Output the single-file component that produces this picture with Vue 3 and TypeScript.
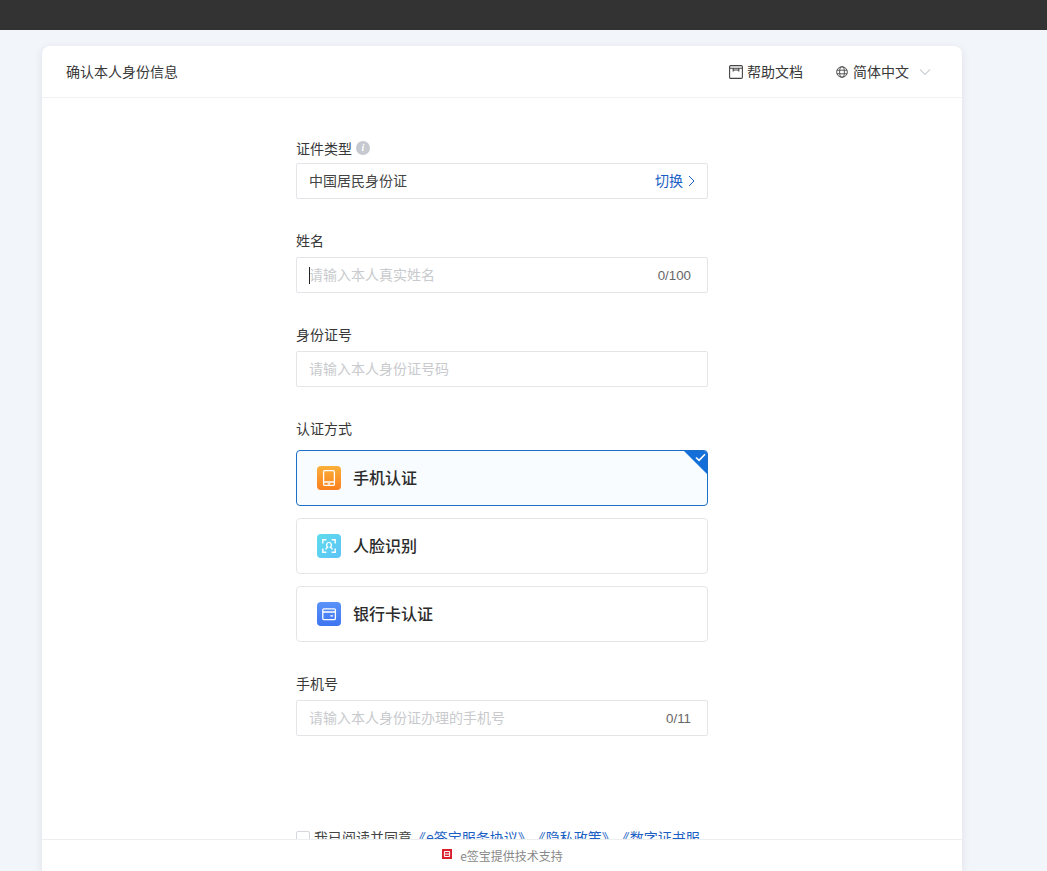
<script setup lang="ts">
const options = [
  { title: '手机认证', kind: 'phone', active: true },
  { title: '人脸识别', kind: 'face', active: false },
  { title: '银行卡认证', kind: 'bank', active: false },
]
</script>

<template>
  <div class="page">
    <div class="topbar"></div>
    <main class="card">
      <header class="head">
        <span class="head-title">确认本人身份信息</span>
        <div class="head-tools">
          <span class="tool">
            <svg class="tool-icon" viewBox="0 0 14 14" fill="none" stroke="#444" stroke-width="1.1">
              <rect x="0.6" y="0.6" width="12.8" height="12.8" rx="1.2" />
              <path d="M0.6 3.2H13.4M4.2 3.4V6.6M9.8 3.4V6.6M4.2 5H9.8" />
            </svg>
            <span class="tool-text">帮助文档</span>
          </span>
          <span class="tool lang">
            <svg class="globe" viewBox="0 0 12 12" fill="none" stroke="#555" stroke-width="1">
              <circle cx="6" cy="6" r="5.3" />
              <ellipse cx="6" cy="6" rx="2.4" ry="5.3" />
              <path d="M0.8 4.2H11.2M0.8 7.8H11.2" />
            </svg>
            <span class="tool-text">简体中文</span>
            <svg class="caret" viewBox="0 0 12 8" fill="none" stroke="#ccd0d6" stroke-width="1.1">
              <path d="M1 1.5L6 6.5L11 1.5" />
            </svg>
          </span>
        </div>
      </header>

      <div class="body">
        <form class="form" @submit.prevent>
          <div class="field">
            <label class="label label-tip">
              证件类型
              <span class="info">i</span>
            </label>
            <div class="box">
              <span class="value">中国居民身份证</span>
              <a class="switch">
                切换
                <svg class="chev" viewBox="0 0 7 12" fill="none" stroke="#1b5fc4" stroke-width="1">
                  <path d="M1 1L6 6L1 11" />
                </svg>
              </a>
            </div>
          </div>

          <div class="field">
            <label class="label">姓名</label>
            <div class="box">
              <i class="cursor"></i>
              <span class="placeholder">请输入本人真实姓名</span>
              <span class="count">0/100</span>
            </div>
          </div>

          <div class="field">
            <label class="label">身份证号</label>
            <div class="box">
              <span class="placeholder">请输入本人身份证号码</span>
            </div>
          </div>

          <div class="field">
            <label class="label label-method">认证方式</label>
            <div class="options">
              <div v-for="o in options" :key="o.kind" class="option" :class="{ active: o.active }">
                <span class="opt-icon" :class="o.kind">
                  <svg v-if="o.kind === 'phone'" viewBox="0 0 24 24" fill="none" stroke="#fff" stroke-width="1.3">
                    <rect x="6.6" y="4.6" width="10.8" height="14.8" rx="1.2" />
                    <path d="M6.6 16H17.4M10.8 17.8H13.2" />
                  </svg>
                  <svg v-else-if="o.kind === 'face'" viewBox="0 0 24 24" fill="none" stroke="#fff" stroke-width="1.4">
                    <path d="M5.8 9.4V5.8H9.4M14.6 5.8H18.2V9.4M5.8 14.6V18.2H9.4M14.6 18.2H18.2V14.6" />
                    <path d="M8.8 15.6C8.8 14 9.8 13.6 10.6 13.2C9.7 12.4 9.5 11.4 9.7 10.4C10 9 10.9 8.4 12 8.4C13.1 8.4 14 9 14.3 10.4C14.5 11.4 14.3 12.4 13.4 13.2C14.2 13.6 15.2 14 15.2 15.6" />
                  </svg>
                  <svg v-else viewBox="0 0 24 24" fill="none" stroke="#fff" stroke-width="1.3">
                    <rect x="5.8" y="6.8" width="12.6" height="10.8" rx="1" />
                    <path d="M5.8 10H18.4M13.4 13.8H16" />
                  </svg>
                </span>
                <span class="opt-title">{{ o.title }}</span>
                <span v-if="o.active" class="corner"></span>
                <svg v-if="o.active" class="tick" viewBox="0 0 12 10" fill="none" stroke="#fff" stroke-width="1.7">
                  <path d="M1 5L4.4 8.2L11 1.4" />
                </svg>
              </div>
            </div>
          </div>

          <div class="field">
            <label class="label">手机号</label>
            <div class="box">
              <span class="placeholder">请输入本人身份证办理的手机号</span>
              <span class="count">0/11</span>
            </div>
          </div>

          <div class="agree">
            <span class="checkbox"></span>
            <span class="agree-text">我已阅读并同意<a class="link">《e签宝服务协议》《隐私政策》《数字证书服</a></span>
          </div>
        </form>
      </div>

      <footer class="foot">
        <svg class="logo" viewBox="0 0 10 10">
          <rect width="10" height="10" fill="#d9202c" />
          <path d="M2.4 2.5H7.6V7.5H2.4Z" fill="none" stroke="#fff" stroke-width="1" />
          <path d="M3 5H7" stroke="#fff" stroke-width="1" />
        </svg>
        <span>e签宝提供技术支持</span>
      </footer>
    </main>
  </div>
</template>

<style>
html,
body {
  margin: 0;
  height: 100%;
  overflow: hidden;
}
</style>

<style scoped>
.page {
  height: 871px;
  display: flex;
  flex-direction: column;
  background: #f2f5f9;
  font-family: "Noto Sans CJK SC", "Noto Sans", sans-serif;
  font-size: 14px;
  color: #383838;
  overflow: hidden;
  text-spacing-trim: space-all;
}
.topbar {
  height: 30px;
  flex: none;
  background: #333;
}
.card {
  flex: 1;
  min-height: 0;
  width: 920px;
  margin: 16px 0 0 42px;
  display: flex;
  flex-direction: column;
  background: #fff;
  border-radius: 8px 8px 0 0;
  box-shadow: 0 2px 8px rgba(40, 60, 100, 0.1);
}
.head {
  height: 51px;
  flex: none;
  display: flex;
  align-items: center;
  justify-content: space-between;
  padding: 0 31px 0 24px;
  border-bottom: 1px solid #f0f1f3;
}
.head-title,
.tool-text {
  line-height: 22px;
  margin-top: -2px;
}
.head-tools {
  display: flex;
  align-items: center;
  gap: 33px;
}
.tool {
  display: flex;
  align-items: center;
  gap: 4px;
  line-height: 22px;
}
.tool-icon {
  width: 14px;
  height: 14px;
}
.globe {
  width: 12px;
  height: 12px;
  margin-right: 1px;
}
.caret {
  width: 12px;
  height: 8px;
  margin-left: 6px;
}
.body {
  flex: 1;
  min-height: 0;
  overflow: hidden;
}
.form {
  width: 412px;
  margin: 40px 0 0 254px;
}
.field + .field {
  margin-top: 31px;
}
.label {
  display: flex;
  align-items: center;
  gap: 4px;
  height: 20px;
  line-height: 20px;
  margin-bottom: 7px;
}
.label-tip {
  margin-bottom: 5px;
}
.label-method {
  margin-bottom: 12px;
}
.info {
  width: 14px;
  height: 14px;
  border-radius: 50%;
  background: #c6cad0;
  color: #fff;
  font: italic 700 10px/14px "Liberation Serif", serif;
  text-align: center;
}
.box {
  position: relative;
  height: 36px;
  box-sizing: border-box;
  display: flex;
  align-items: center;
  justify-content: space-between;
  padding: 0 12px;
  border: 1px solid #e3e5e8;
  border-radius: 2px;
  background: #fff;
}
.value {
  color: #444;
  margin-top: -2px;
}
.placeholder {
  color: #c8cacd;
  margin-top: -2px;
}
.cursor {
  position: absolute;
  left: 12px;
  top: 9px;
  width: 1px;
  height: 17px;
  background: #222;
}
.count {
  padding-right: 4px;
  color: #666;
  font-family: "Liberation Sans", sans-serif;
  font-size: 13.3px;
}
.switch {
  display: flex;
  align-items: center;
  gap: 5px;
  color: #1b5fc4;
  line-height: 20px;
  margin-top: -2px;
}
.chev {
  width: 7px;
  height: 12px;
  margin-top: 2px;
}
.options {
  display: flex;
  flex-direction: column;
  gap: 12px;
}
.option {
  position: relative;
  height: 56px;
  box-sizing: border-box;
  display: flex;
  align-items: center;
  gap: 12px;
  padding-left: 20px;
  border: 1px solid #e3e5e8;
  border-radius: 4px;
  overflow: hidden;
}
.option.active {
  border-color: #1b6fc9;
  background: #f8fcfe;
}
.opt-icon {
  width: 24px;
  height: 24px;
  border-radius: 4px;
  flex: none;
}
.opt-icon svg {
  display: block;
  width: 24px;
  height: 24px;
}
.opt-icon.phone {
  background: linear-gradient(180deg, #fbb03b, #f97f1d);
}
.opt-icon.face {
  background: linear-gradient(135deg, #5fdcea, #5cc2f8);
}
.opt-icon.bank {
  background: linear-gradient(180deg, #5a93f8, #3f74f2);
}
.opt-title {
  font-size: 16px;
  font-weight: 500;
  color: #2b2b2b;
  margin-top: -2px;
}
.corner {
  position: absolute;
  top: 0;
  right: 0;
  width: 23px;
  height: 23px;
  background: #1470d8;
  clip-path: polygon(0 0, 100% 0, 100% 100%);
}
.tick {
  position: absolute;
  top: 2px;
  right: 1px;
  width: 11px;
  height: 9px;
}
.agree {
  display: flex;
  align-items: center;
  gap: 4px;
  margin-top: 92px;
  line-height: 22px;
  white-space: nowrap;
  color: #444;
}
.agree-text {
  margin-top: -2px;
}
.checkbox {
  width: 12px;
  height: 12px;
  border: 1px solid #d5d8dc;
  border-radius: 2px;
  flex: none;
}
.link {
  color: #1b5fc4;
}
.foot {
  height: 31px;
  flex: none;
  display: flex;
  align-items: center;
  justify-content: center;
  gap: 8px;
  padding-left: 1px;
  border-top: 1px solid #eceef0;
  font-size: 12px;
  color: #888;
  background: #fff;
}
.logo {
  width: 10px;
  height: 10px;
  margin-top: -3px;
}
</style>
